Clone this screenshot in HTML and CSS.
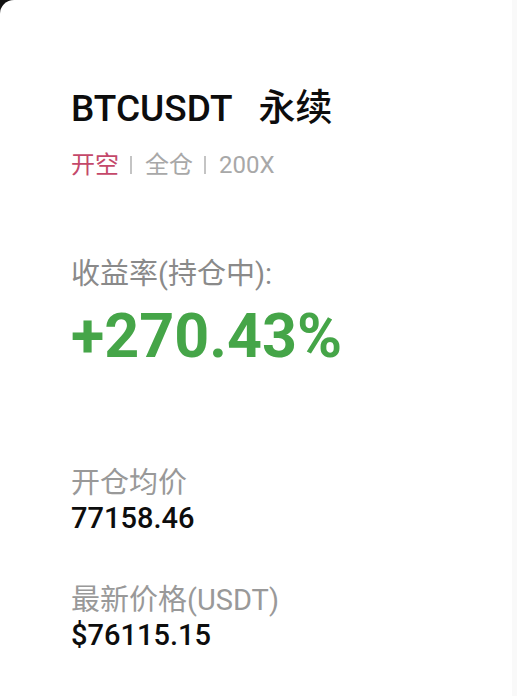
FILE: index.html
```html
<!doctype html>
<html lang=zh>
	<head>
		<meta charset=utf-8>
		<title>BTCUSDT 永续</title>
		<link rel="stylesheet" href="styles.css">
	</head>
	<body>
		<div id="card">
			<div class="inner">
				<h1 class="title">BTCUSDT<span class="kind">永续</span></h1>
				<div class="tags">
					<span class="side">开空</span>
					<span class="sep"></span>
					<span class="tag">全仓</span>
					<span class="sep"></span>
					<span class="tag">200X</span>
				</div>

				<div class="pnl-label">收益率(持仓中):</div>
				<div class="pnl">+270.43%</div>

				<div class="field first">
					<div class="label">开仓均价</div>
					<div class="value">77158.46</div>
				</div>
				<div class="field">
					<div class="label">最新价格(USDT)</div>
					<div class="value">$76115.15</div>
				</div>
			</div>
		</div>
	</body>
</html>
```

FILE: styles.css
```css
html,
body
{
	margin: 0px;
	padding: 0px;
	height: 100%;
	background-color: #111111;
}

body
{
	font-family: 'Roboto', 'Noto Sans CJK SC', sans-serif;
	color: #111111;
}

#card
{
	height: 100%;
	background-color: #ffffff;
	border-top-left-radius: 14px;
	border-right: 5px solid #f9f9f9;
	box-sizing: border-box;
}

#card .inner
{
	padding: 88px 0px 0px 71px;
}

.title
{
	margin: 0px;
	font-size: 37px;
	line-height: 42px;
	font-weight: 500;
	color: #0d0d0d;
}

.title .kind
{
	margin-left: 26px;
}

.tags
{
	display: flex;
	align-items: center;
	margin-top: 21px;
	font-size: 24px;
	line-height: 28px;
	color: #a8a8a8;
}

.tags .side
{
	color: #c4486a;
}

.tags .sep
{
	width: 2px;
	height: 18px;
	margin: 0px 13px 0px 11px;
	background-color: #c4c4c4;
}

.pnl-label
{
	margin-top: 78px;
	font-size: 29px;
	line-height: 34px;
	color: #8a8a8a;
}

.pnl
{
	margin-top: 13px;
	font-size: 61px;
	line-height: 64px;
	font-weight: 700;
	color: #45a548;
}

.field
{
	margin-top: 50px;
}

.field.first
{
	margin-top: 99px;
}

.field .label
{
	font-size: 29px;
	line-height: 32px;
	color: #999999;
}

.field .value
{
	margin-top: 3px;
	font-size: 29px;
	line-height: 32px;
	font-weight: 500;
	color: #0d0d0d;
}
```
